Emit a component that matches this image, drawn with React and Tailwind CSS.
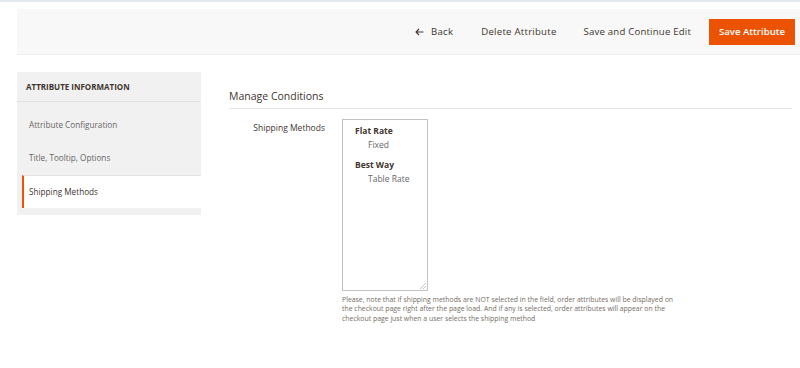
import React from "react";

export default function App() {
  const font = { fontFamily: '"Open Sans", "Noto Sans", sans-serif' };
  return (
    <div className="w-[800px] h-[368px] bg-white overflow-hidden relative" style={font}>
      <div className="h-[2px] bg-[#e4e9f0]" />
      <div className="pl-[17px] pt-[7px]">
        <div className="h-[46px] bg-[#f8f8f8] border-b border-[#eeeeee] flex items-center justify-end pr-[5px] pt-[1px]">
          <button className="flex items-center gap-[7px] text-[9.6px] tracking-[0.25px] text-[#41362f] mr-[28px]">
            <svg width="9" height="8" viewBox="0 0 9 8" fill="none" stroke="#41362f" strokeWidth="1.1">
              <path d="M8.5 4H1M4 1L1 4l3 3" />
            </svg>
            Back
          </button>
          <button className="text-[9.6px] tracking-[0.25px] text-[#41362f] mr-[27px]">Delete Attribute</button>
          <button className="text-[9.6px] tracking-[0.2px] text-[#41362f] mr-[18px]">Save and Continue Edit</button>
          <button className="h-[26px] w-[86px] bg-[#eb5202] text-white text-[9.6px] font-semibold">Save Attribute</button>
        </div>
      </div>
      <div className="flex pl-[17px] pt-[17px]">
        <div className="w-[184px] h-[143px] bg-[#f1f1f1] flex flex-col">
          <div className="h-[30px] flex items-center pl-[9px] pt-[1px] border-b border-[#e3e3e3] text-[8px] font-bold text-[#41362f]">
            ATTRIBUTE INFORMATION
          </div>
          <div className="pt-[7px] pl-[5px] flex flex-col">
            <div className="h-[33px] flex items-center pl-[7px] text-[8.2px] text-[#666666]">Attribute Configuration</div>
            <div className="h-[33px] flex items-center pl-[7px] text-[8.2px] text-[#666666]">Title, Tooltip, Options</div>
            <div className="h-[33px] flex items-center pl-[5px] text-[8.2px] text-[#41362f] bg-white border-l-2 border-[#eb5202] border-t border-t-[#e3e3e3]">Shipping Methods</div>
          </div>
        </div>
        <div className="ml-[28px] w-[563px]">
          <div className="pt-[17px] pb-[3px] border-b border-[#e3e3e3] text-[10.5px] text-[#41362f]">Manage Conditions</div>
          <div className="flex pt-[10px]">
            <div className="w-[96px] text-right text-[8.5px] text-[#41362f] pt-[3px]">Shipping Methods</div>
            <div className="ml-[17px]">
              <div className="relative w-[86px] h-[172px] border border-[#c2c2c2] pl-[12px] pt-[4px]">
                <div className="text-[8.5px] font-bold text-[#41362f] leading-[14px]">Flat Rate</div>
                <div className="text-[8.5px] text-[#666666] leading-[14px] pl-[13px]">Fixed</div>
                <div className="text-[8.5px] font-bold text-[#41362f] leading-[14px] mt-[6px]">Best Way</div>
                <div className="text-[8.5px] text-[#666666] leading-[14px] pl-[13px]">Table Rate</div>
                <svg className="absolute right-[1px] bottom-[1px]" width="6" height="6" viewBox="0 0 6 6" stroke="#9a9a9a" strokeWidth="0.6">
                  <path d="M6 0L0 6M6 3L3 6" />
                </svg>
              </div>
              <div className="mt-[4px] w-[350px] text-[6.9px] leading-[9.5px] text-[#756d66] whitespace-nowrap">
                Please, note that if shipping methods are NOT selected in the field, order attributes will be displayed on
                <br />
                the checkout page right after the page load. And if any is selected, order attributes will appear on the
                <br />
                checkout page just when a user selects the shipping method
              </div>
            </div>
          </div>
        </div>
      </div>
    </div>
  );
}
